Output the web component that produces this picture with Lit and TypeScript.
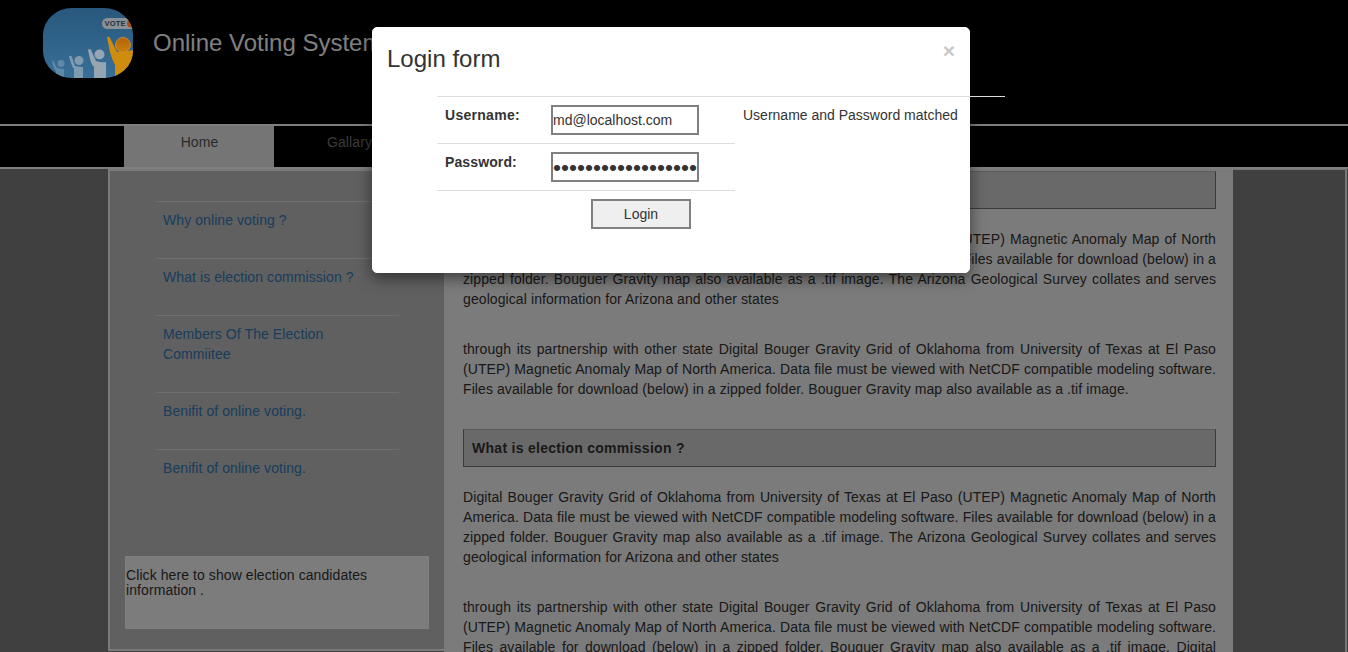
import { LitElement, html, css } from "lit";
import { customElement } from "lit/decorators.js";

const LINKS = [
  "Why online voting ?",
  "What is election commission ?",
  "Members Of The Election Commiitee",
  "Benifit of online voting.",
  "Benifit of online voting.",
];

const INTRO =
  "Digital Bouger Gravity Grid of Oklahoma from University of Texas at El Paso (UTEP) Magnetic Anomaly Map of North America. Data file must be viewed with NetCDF compatible modeling software. Files available for download (below) in a zipped folder. Bouguer Gravity map also available as a .tif image. The Arizona Geological Survey collates and serves geological information for Arizona and other states";
const MORE =
  "through its partnership with other state Digital Bouger Gravity Grid of Oklahoma from University of Texas at El Paso (UTEP) Magnetic Anomaly Map of North America. Data file must be viewed with NetCDF compatible modeling software. Files available for download (below) in a zipped folder. Bouguer Gravity map also available as a .tif image.";

@customElement("login-dialog")
class LoginDialog extends LitElement {
  static styles = css`
    :host { display: block; width: 598px; height: 246px; box-sizing: border-box; background: #fff; border-radius: 5px; border: 1px solid #fff; box-shadow: 0 5px 15px rgba(0, 0, 0, 0.5); padding: 17px 14px 0; }
    .head { display: flex; justify-content: space-between; height: 51px; }
    h3 { margin: 0; padding-top: 1px; font-size: 24px; line-height: 26px; font-weight: 400; }
    .close { font-size: 21px; line-height: 21px; font-weight: 700; color: #c8c8c8; margin-top: -5px; }
    .form { display: grid; grid-template-columns: 106px 192px 270px; margin-left: 50px; width: 568px; }
    .cell { border-top: 1px solid #ddd; padding: 8px 8px 0; height: 38px; line-height: 20px; }
    .cell.bold { font-weight: 700; letter-spacing: 0.28px; }
    .cell.pass { letter-spacing: 0.12px; }
    .none { border-top-color: transparent; }
    input, button { box-sizing: border-box; font: inherit; color: #333; border: 2px solid #808080; height: 30px; padding: 0; border-radius: 0; display: block; }
    input { width: 148px; background: #fff; line-height: 20px; }
    input[type="password"] { font-size: 22.86px; line-height: 26px; }
    button { width: 100px; margin-left: 40px; background: #efefef; }
  `;
  render() {
    return html`
      <div class="head"><h3>Login form</h3><span class="close">×</span></div>
      <div class="form">
        <div class="cell bold">Username:</div>
        <div class="cell"><input type="text" value="md@localhost.com" /></div>
        <div class="cell">Username and Password matched</div>
        <div class="cell bold pass">Password:</div>
        <div class="cell"><input type="password" value="passwordpassword12" /></div>
        <div class="cell none"></div>
        <div class="cell"></div>
        <div class="cell"><button>Login</button></div>
      </div>
    `;
  }
}

@customElement("app-root")
class AppRoot extends LitElement {
  static styles = css`
    :host { display: block; position: relative; height: 652px; overflow: hidden; background: #808080; font: 14px/20px "Liberation Sans", Arial, sans-serif; color: #333; }
    .header { height: 124px; box-sizing: border-box; background: #000; display: flex; padding: 8px 0 0 43px; gap: 20px; }
    .logo { width: 90px; height: 70px; flex: none; position: relative; z-index: 1; }
    .brand { font-size: 24px; line-height: 26px; color: #fff; margin-top: 22px; white-space: nowrap; }
    .nav { height: 45px; box-sizing: border-box; background: #000; border-top: 2px solid #fff; border-bottom: 2px solid #fff; display: flex; padding-left: 124px; }
    .tab { width: 150px; text-align: center; line-height: 32px; color: #777; letter-spacing: 0.1px; text-indent: 1px; }
    .tab.active { background: #eaeaea; color: #555; }
    .body { display: grid; grid-template-columns: 108px 336px 789px 1fr; height: 483px; box-sizing: border-box; }
    .side { border-left: 2px solid #f4f4f4; border-top: 2px solid #f4f4f4; border-bottom: 2px solid #f4f4f4; background: #c0c0c0; height: 482px; box-sizing: border-box; padding: 30px 15px 0; letter-spacing: 0.08px; }
    .links { width: 243px; margin-left: 31px; height: 355px; }
    .link { border-top: 1px solid #ddd; padding: 8px 60px 28px 7px; color: #337ab7; }
    .link.wide { padding-right: 0; }
    .box { height: 73px; box-sizing: border-box; background: #f8f8f8; border: 1px solid #fff; line-height: 15px; padding: 11px 40px 0 0; color: #333; }
    .main { background: #f6f6f6; padding: 2px 17px 0 19px; overflow: hidden; }
    .title { box-sizing: border-box; height: 38px; background: #d3d3d3; border: 1px solid #777; border-top-color: #b5b5b5; padding: 8px; font-weight: 700; letter-spacing: 0.28px; }
    p { margin: 0 0 30px; text-align: justify; letter-spacing: 0.09px; }
    .title + p { margin-top: 20px; }
    .right { border-top: 1px solid #eee; border-right: 2px solid #eee; margin-right: 1px; }
    .shade { position: absolute; inset: 0; background: rgba(0, 0, 0, 0.5); }
    .dialog { position: absolute; left: 372px; top: 27px; }
  `;
  render() {
    return html`
      <header class="header">
        <svg class="logo" viewBox="0 0 90 70">
          <defs>
            <clipPath id="round"><rect width="90" height="70" rx="29" ry="27" /></clipPath>
            <linearGradient id="sky" x1="0" y1="0" x2="0" y2="1"><stop offset="0" stop-color="#28587c" /><stop offset="1" stop-color="#386f98" /></linearGradient>
            <linearGradient id="gold" x1="0" y1="0" x2="0" y2="1"><stop offset="0" stop-color="#b5610c" /><stop offset="1" stop-color="#c98208" /></linearGradient>
          </defs>
          <g clip-path="url(#round)">
            <rect width="90" height="70" fill="url(#sky)" />
            <rect x="59" y="10" width="40" height="11" rx="5.5" fill="#8a9196" />
            <text x="61.5" y="18.4" font-size="7.6" font-weight="700" fill="#25303a" textLength="21" font-family="Liberation Sans">VOTE</text>
            <circle cx="88" cy="15.5" r="4" fill="#a84a14" />
            <path d="M64 29q2-1 3 1l7 14q9 0 16-2v28H72V57q-3-5-5-13z" fill="#d08c0c" />
            <circle cx="80" cy="37" r="7.5" fill="url(#gold)" stroke="#d8982a" stroke-width=".8" />
            <g fill="#95a5b2">
              <path d="M45 42q2-2 3 0l5 11q6 2 10 1v16H51V59q-3-3-4-8z" /><circle cx="56.5" cy="46.5" r="5" />
            </g>
            <g fill="#7f9bb0">
              <path d="M26 48q2-1 3 1l3 9q5 1 8 1v11h-9v-9q-3-4-5-13z" /><circle cx="36" cy="52.5" r="4.5" />
            </g>
            <g fill="#5f88a6">
              <path d="M9 53q1-1 2 1l3 6q4 1 7 1v9h-8v-7q-3-3-4-10z" /><circle cx="18" cy="55.5" r="3.5" />
            </g>
          </g>
        </svg>
        <div class="brand">Online Voting System</div>
      </header>
      <nav class="nav"><div class="tab active">Home</div><div class="tab">Gallary</div></nav>
      <div class="body">
        <div></div>
        <aside class="side">
          <div class="links">
            ${LINKS.map((t) => html`<div class="link ${t.startsWith("What") ? "wide" : ""}">${t}</div>`)}
          </div>
          <div class="box">Click here to show election candidates information .</div>
        </aside>
        <main class="main">
          <div class="title">Why online voting ?</div>
          <p>${INTRO}</p>
          <p>${MORE}</p>
          <div class="title">What is election commission ?</div>
          <p>${INTRO}</p>
          <p>${MORE} Digital Bouger Gravity Grid of Oklahoma</p>
        </main>
        <div class="right"></div>
      </div>
      <div class="shade"></div>
      <login-dialog class="dialog"></login-dialog>
    `;
  }
}
